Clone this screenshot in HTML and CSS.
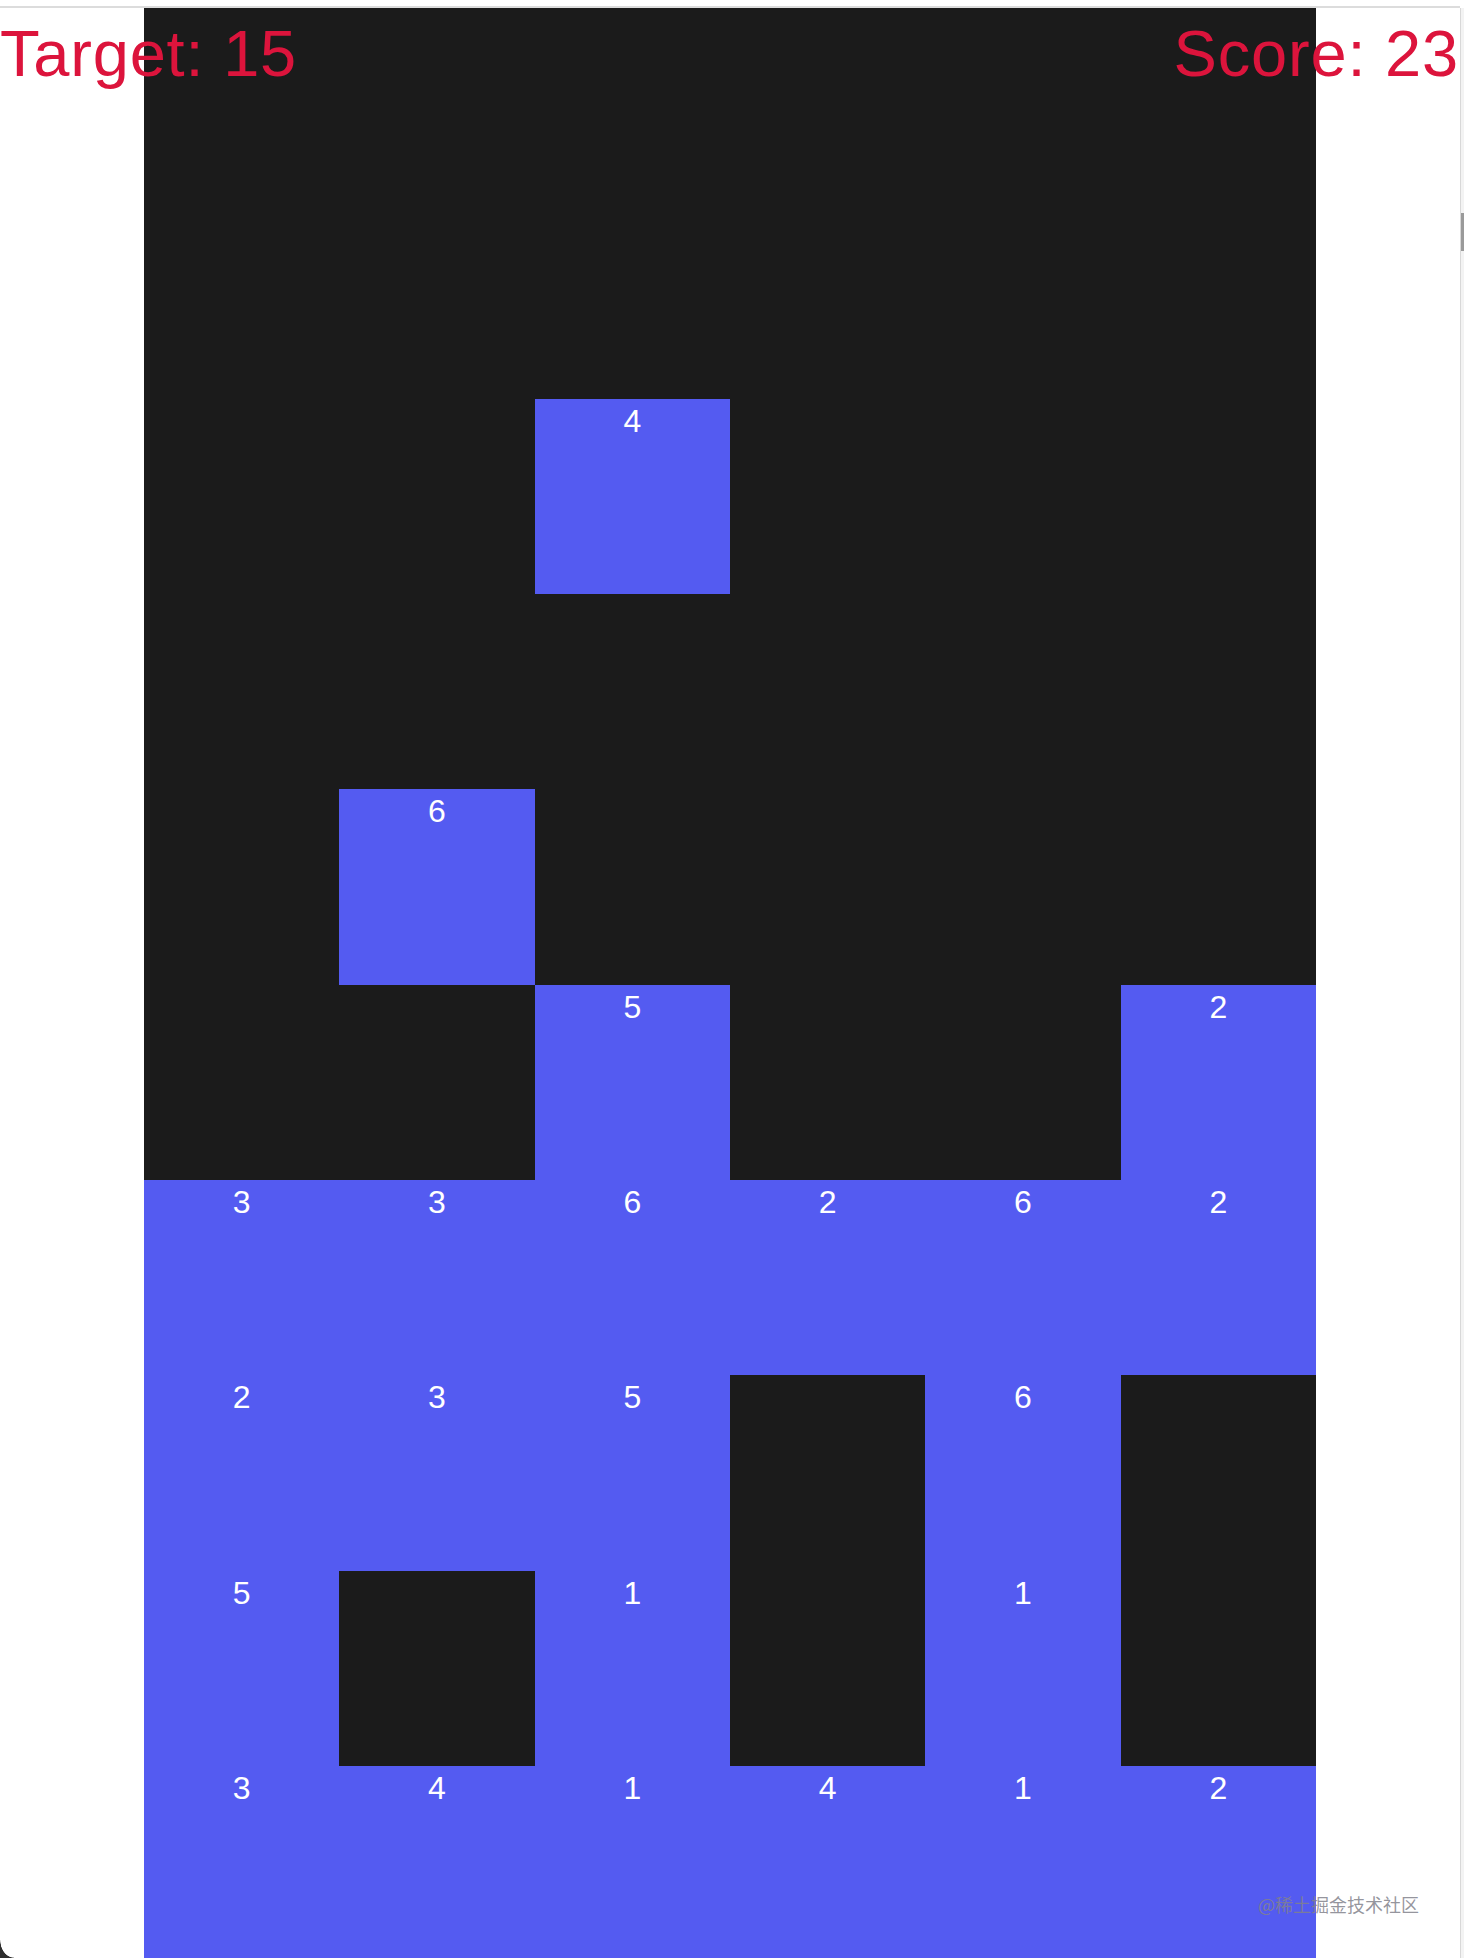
FILE: index.html
```html
<!DOCTYPE html>
<html lang="en">
<head>
<meta charset="utf-8">
<title>Game</title>
<link rel="stylesheet" href="styles.css">
</head>
<body>
<div class="frame">
  <div class="stage">
    <div class="board">
      <div class="cell"></div><div class="cell"></div><div class="cell"></div><div class="cell"></div><div class="cell"></div><div class="cell"></div>
      <div class="cell"></div><div class="cell"></div><div class="cell"></div><div class="cell"></div><div class="cell"></div><div class="cell"></div>
      <div class="cell"></div><div class="cell"></div><div class="cell on">4</div><div class="cell"></div><div class="cell"></div><div class="cell"></div>
      <div class="cell"></div><div class="cell"></div><div class="cell"></div><div class="cell"></div><div class="cell"></div><div class="cell"></div>
      <div class="cell"></div><div class="cell on">6</div><div class="cell"></div><div class="cell"></div><div class="cell"></div><div class="cell"></div>
      <div class="cell"></div><div class="cell"></div><div class="cell on">5</div><div class="cell"></div><div class="cell"></div><div class="cell on">2</div>
      <div class="cell on">3</div><div class="cell on">3</div><div class="cell on">6</div><div class="cell on">2</div><div class="cell on">6</div><div class="cell on">2</div>
      <div class="cell on">2</div><div class="cell on">3</div><div class="cell on">5</div><div class="cell"></div><div class="cell on">6</div><div class="cell"></div>
      <div class="cell on">5</div><div class="cell"></div><div class="cell on">1</div><div class="cell"></div><div class="cell on">1</div><div class="cell"></div>
      <div class="cell on">3</div><div class="cell on">4</div><div class="cell on">1</div><div class="cell on">4</div><div class="cell on">1</div><div class="cell on">2</div>
    </div>
    <div class="hud hud-left">Target: 15</div>
    <div class="hud hud-right">Score: 23</div>
    <div class="watermark">@稀土掘金技术社区</div>
  </div>
  <div class="scrollbar"><div class="thumb"></div></div>
  <div class="corner"></div>
</div>
</body>
</html>
```
FILE: styles.css
```css
html, body {
  margin: 0;
  padding: 0;
  overflow: hidden;
  background: #ffffff;
}

.frame {
  position: relative;
  width: 1464px;
  height: 1958px;
  padding-top: 6px;
  box-sizing: border-box;
}

.stage {
  position: relative;
  border-top: 2px solid #dcdcdc;
  height: 1950px;
  margin-right: 4px;
  overflow: hidden;
  display: flex;
  justify-content: flex-start;
}

.board {
  margin-left: 144px;
  width: 1172px;
  display: grid;
  grid-template-columns: repeat(6, 1fr);
  grid-auto-rows: 195.33px;
  background: #1b1b1b;
}

.cell {
  background: #1b1b1b;
  color: #ffffff;
  font-family: "Liberation Sans", Arial, sans-serif;
  font-size: 32px;
  text-align: center;
  padding-top: 4px;
  line-height: normal;
}

.cell.on {
  background: #545bf1;
}

.hud {
  position: absolute;
  top: 8px;
  font-family: "Liberation Sans", Arial, sans-serif;
  font-size: 65px;
  letter-spacing: 0.8px;
  line-height: normal;
  color: #dc143c;
  white-space: nowrap;
}

.hud-left {
  left: 0;
}

.hud-right {
  right: 1px;
}

.watermark {
  position: absolute;
  left: 1258px;
  top: 1884px;
  font-family: "Noto Sans CJK SC", sans-serif;
  font-size: 18px;
  line-height: 24px;
  color: rgba(130, 130, 140, 0.85);
  white-space: nowrap;
}

.scrollbar {
  position: absolute;
  top: 8px;
  right: 0;
  width: 4px;
  height: 1950px;
  background: #f3f3f3;
  border-left: 1px solid #d8d8d8;
  box-sizing: border-box;
}

.thumb {
  margin-top: 205px;
  height: 38px;
  background: #9a9a9a;
}

.corner {
  position: absolute;
  left: 0;
  bottom: 0;
  width: 14px;
  height: 18px;
  background: radial-gradient(ellipse 14px 18px at 100% 0, transparent 96%, #2e2e2e 100%);
}
```
